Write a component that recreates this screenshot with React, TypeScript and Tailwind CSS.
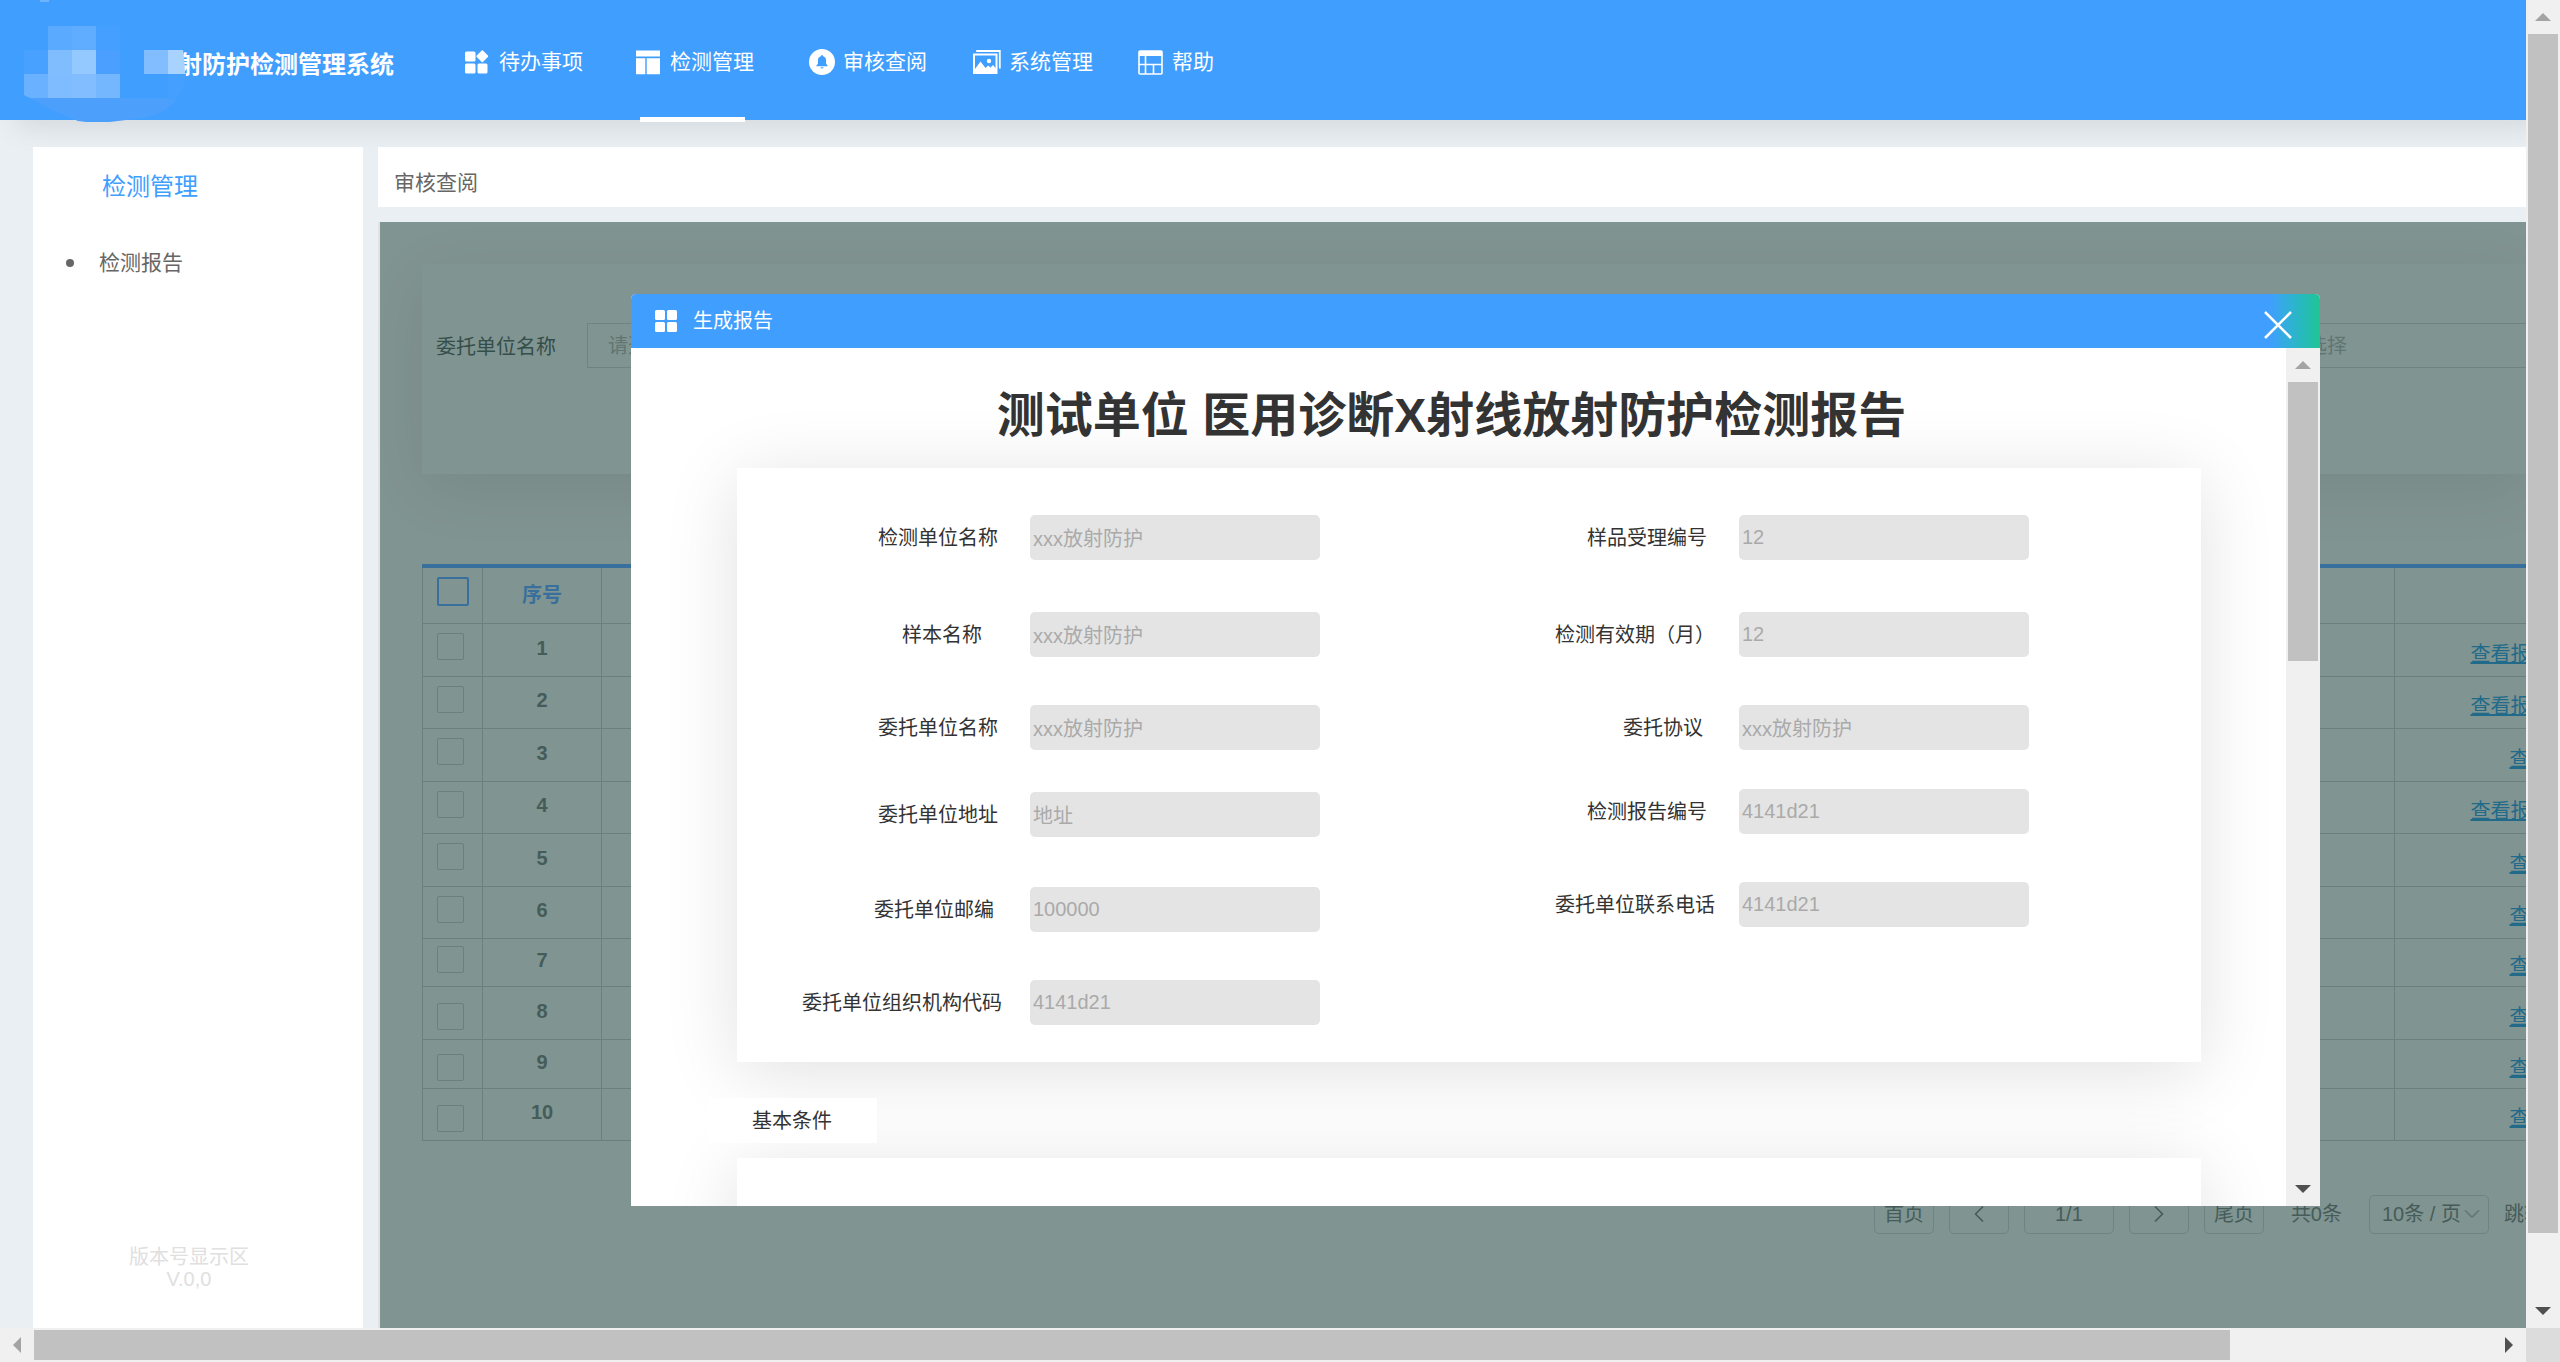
import type { ReactNode } from 'react'
import clsx from 'clsx'
import { ChevronDown, ChevronLeft, ChevronRight } from 'lucide-react'

type Field = { id: string; label: string; value: string; gap: string }

const leftFields: Field[] = [
  { id: 'testOrg', label: '检测单位名称', value: 'xxx放射防护', gap: 'pr-8' },
  { id: 'sampleName', label: '样本名称', value: 'xxx放射防护', gap: 'pr-12' },
  { id: 'clientName', label: '委托单位名称', value: 'xxx放射防护', gap: 'pr-8' },
  { id: 'clientAddress', label: '委托单位地址', value: '地址', gap: 'pr-8' },
  { id: 'clientZip', label: '委托单位邮编', value: '100000', gap: 'pr-9' },
  { id: 'clientCode', label: '委托单位组织机构代码', value: '4141d21', gap: 'pr-7' },
]

const rightFields: Field[] = [
  { id: 'sampleNo', label: '样品受理编号', value: '12', gap: 'pr-8' },
  { id: 'validMonths', label: '检测有效期（月）', value: '12', gap: 'pr-6' },
  { id: 'agreement', label: '委托协议', value: 'xxx放射防护', gap: 'pr-9' },
  { id: 'reportNo', label: '检测报告编号', value: '4141d21', gap: 'pr-8' },
  { id: 'clientPhone', label: '委托单位联系电话', value: '4141d21', gap: 'pr-6' },
]

const rows = [
  { height: 'h-[53px]', full: true },
  { height: 'h-[52px]', full: true },
  { height: 'h-[53px]', full: false },
  { height: 'h-[52px]', full: true },
  { height: 'h-[53px]', full: false },
  { height: 'h-[52px]', full: false },
  { height: 'h-12', full: false },
  { height: 'h-[53px]', full: false },
  { height: 'h-[49px]', full: false },
  { height: 'h-[52px]', full: false },
]

function TodoIcon() {
  return (
    <svg viewBox="0 0 26 26" className="size-[26px] shrink-0" fill="currentColor">
      <rect x="0" y="2.5" width="10.5" height="10" rx="1.5" />
      <rect x="0" y="14.5" width="10.5" height="10" rx="1.5" />
      <rect x="12.5" y="14.5" width="10" height="10" rx="1.5" />
      <path d="M16.7 1.4a.9.9 0 0 1 1.2 0l5 5.2a.9.9 0 0 1 0 1.3l-5 5.2a.9.9 0 0 1-1.2 0l-5-5.2a.9.9 0 0 1 0-1.3z" />
    </svg>
  )
}

function LayoutIcon() {
  return (
    <svg viewBox="0 0 26 26" className="size-[26px] shrink-0" fill="currentColor">
      <path d="M0 1.5h24v6H0zM0 9.2h9.3v16H0zM10.7 9.2H24v16H10.7z" />
    </svg>
  )
}

function BellIcon() {
  return (
    <svg viewBox="0 0 26 26" className="size-[26px] shrink-0">
      <circle cx="13" cy="13" r="13" fill="currentColor" />
      <path d="M13 6.2c.8 0 1.2.5 1.2 1.1 2 .6 2.9 2.3 2.9 4.2v3.2l1.5 1.9v.7H7.4v-.7l1.5-1.9v-3.2c0-1.9.9-3.6 2.9-4.2 0-.6.4-1.1 1.2-1.1zM11.5 18.2h3a1.5 1.3 0 0 1-3 0z" fill="#409eff" />
    </svg>
  )
}

function PictureIcon() {
  return (
    <svg viewBox="0 0 28 26" className="h-[26px] w-7 shrink-0" fill="none" stroke="currentColor">
      <path d="M3.2 2h23.6v17.5" strokeWidth="1.8" />
      <rect x="1" y="5.5" width="22.5" height="18.5" strokeWidth="2" />
      <circle cx="16" cy="12" r="2.2" fill="currentColor" stroke="none" />
      <path d="M2 20l5.500-7.500 5 6.500 2.700-2.500 2.300 2 2.500-2.500 3 3.500v4.500H2z" fill="currentColor" stroke="none" />
    </svg>
  )
}

function GridIcon() {
  return (
    <svg viewBox="0 0 26 26" className="size-[26px] shrink-0" fill="none" stroke="currentColor">
      <rect x="1" y="2" width="23" height="23" rx="1" strokeWidth="1.6" />
      <path d="M1 2h23v5H1z" fill="currentColor" stroke="none" />
      <path d="M1 15.5h23M7.5 7v18M15.5 15.5V25" strokeWidth="1.6" />
    </svg>
  )
}

function MosaicLogo() {
  return (
    <svg viewBox="0 0 190 122" className="absolute left-0 top-0 h-[122px] w-[190px]" aria-hidden="true">
      <defs>
        <clipPath id="logo-shape">
          <path d="M24 0H172Q184 40 186 74C186 96 166 115 142 118L118 121Q98 124 78 121L54 111L24 95z" />
        </clipPath>
      </defs>
      <path d="M40 0h9v2h-9z" fill="#6db4ff" />
      <g clipPath="url(#logo-shape)">
        <path d="M24 98H190V124H24z" fill="#4d9ffc" />
        <path d="M168 74h22v26h-22zM96 26h24v24H96z" fill="#459ffe" />
        <path d="M48 26h24v24H48z" fill="#5aaaff" />
        <path d="M72 26h24v24H72z" fill="#60adff" />
        <path d="M24 50h24v24H24z" fill="#48a1ff" />
        <path d="M48 50h24v24H48z" fill="#80bdff" />
        <path d="M72 50h24v24H72z" fill="#94c9ff" />
        <path d="M96 50h24v24H96z" fill="#4ba0ff" />
        <path d="M24 74h24v24H24z" fill="#6ab2ff" />
        <path d="M48 74h24v24H48z" fill="#7fbcff" />
        <path d="M72 74h24v24H72z" fill="#82beff" />
        <path d="M96 74h24v24H96z" fill="#74b7ff" />
      </g>
      <path d="M144 50h24v24h-24z" fill="#82beff" />
      <path d="M168 50h15q2 12 2 24h-17z" fill="#a9d3ff" />
    </svg>
  )
}

function Arrow({ className }: { className?: string }) {
  return (
    <svg viewBox="0 0 16 8" className={clsx('h-2 w-4', className)} fill="currentColor">
      <path d="M0 8 8 0l8 8z" />
    </svg>
  )
}

function VerticalBar({ thumb }: { thumb: string }) {
  return (
    <div className="relative flex w-[34px] shrink-0 flex-col bg-[#f0f0f0]">
      <button aria-label="向上滚动" className="flex h-[34px] items-center justify-center text-[#a3a3a3]">
        <Arrow />
      </button>
      <div className="min-h-0 flex-1 px-0.5">
        <div className={clsx('bg-[#c1c1c1]', thumb)} />
      </div>
      <button aria-label="向下滚动" className="flex h-[34px] items-center justify-center text-[#505050]">
        <Arrow className="rotate-180" />
      </button>
    </div>
  )
}

function HorizontalBar() {
  return (
    <div className="flex h-[34px] shrink-0 bg-[#f0f0f0]">
      <button aria-label="向左滚动" className="flex w-[34px] items-center justify-center text-[#a3a3a3]">
        <Arrow className="-rotate-90" />
      </button>
      <div className="flex-1 py-0.5 pr-[262px]">
        <div className="h-full bg-[#c1c1c1]" />
      </div>
      <button aria-label="向右滚动" className="flex w-[34px] items-center justify-center text-[#505050]">
        <Arrow className="rotate-90" />
      </button>
      <div className="w-[34px] bg-[#dcdcdc]" />
    </div>
  )
}

function NavItem({ icon, label, active }: { icon: ReactNode; label: string; active?: boolean }) {
  return (
    <a href="#" className="relative flex items-center gap-2 pt-1">
      {icon}
      {label}
      {active && <span className="absolute -bottom-0.5 left-1 h-[5px] w-[105px] bg-white" />}
    </a>
  )
}

function FieldRow({ field, labelWidth }: { field: Field; labelWidth: string }) {
  return (
    <div className="flex h-[45px] items-center">
      <label htmlFor={field.id} className={clsx('text-right text-[#333]', labelWidth, field.gap)}>
        {field.label}
      </label>
      <input
        id={field.id}
        defaultValue={field.value}
        disabled
        className="h-[45px] w-[290px] rounded-[5px] bg-[#e4e4e4] px-[3px] text-[#aaa]"
      />
    </div>
  )
}

function ReportDialog() {
  return (
    <div role="dialog" aria-label="生成报告" className="flex flex-1 flex-col overflow-hidden rounded-t-[5px] bg-white">
      <div className="flex h-[54px] shrink-0 items-center bg-linear-to-r from-[#409eff] from-97% to-[#20c594] pl-6 pr-7 text-white">
        <svg viewBox="0 0 22 22" className="size-[22px]" fill="currentColor">
          <rect width="10" height="10" rx="1.5" />
          <rect x="12" width="10" height="10" rx="1.5" />
          <rect y="12" width="10" height="10" rx="1.5" />
          <rect x="12" y="12" width="10" height="10" rx="1.5" />
        </svg>
        <h2 className="flex-1 pl-4 text-[20px]">生成报告</h2>
        <button aria-label="关闭" className="pt-2">
          <svg viewBox="0 0 28 28" className="size-7" fill="none" stroke="currentColor" strokeWidth="2.5">
            <path d="M1 1 27 27M27 1 1 27" />
          </svg>
        </button>
      </div>
      <div className="flex min-h-0 flex-1">
        <div className="flex-1 overflow-hidden">
          <h1 className="pb-6 pr-3.5 pt-10 text-center text-[48px] font-bold leading-[56px] text-[#333]">
            测试单位 医用诊断X射线放射防护检测报告
          </h1>
          <div className="ml-[106px] mr-[85px] flex bg-white pb-[37px] pt-[47px] shadow-[0_10px_70px_rgba(0,0,0,0.12)]">
            <div className="grid grid-rows-[97px_93px_87px_95px_93px_45px]">
              {leftFields.map((f) => <FieldRow key={f.id} field={f} labelWidth="w-[293px]" />)}
            </div>
            <div className="grid grid-rows-[97px_93px_84px_93px_45px] content-start">
              {rightFields.map((f) => <FieldRow key={f.id} field={f} labelWidth="w-[419px]" />)}
            </div>
          </div>
          <div className="relative ml-[76px] mt-9 flex h-[45px] w-[170px] items-center justify-center bg-white text-[#333]">
            基本条件
          </div>
          <div className="ml-[106px] mr-[85px] mt-[15px] h-80 bg-white shadow-[0_10px_70px_rgba(0,0,0,0.12)]" />
        </div>
        <VerticalBar thumb="h-[calc(100%-511px)]" />
      </div>
    </div>
  )
}

function ReportTable() {
  return (
    <table className="w-full table-fixed border-collapse">
      <colgroup>
        <col className="w-[60px]" />
        <col className="w-[119px]" />
        <col />
        <col className="w-[132px]" />
      </colgroup>
      <thead>
        <tr className="h-[57px] border-t-4 border-[#396f9c] text-[#396f9c]">
          <th className="border-x border-b border-[#6b807d] pb-2 pl-3.5 text-left">
            <input type="checkbox" aria-label="全选" className="block h-[29px] w-8 appearance-none rounded-xs border-2 border-[#396f9c]" />
          </th>
          <th className="border-x border-b border-[#6b807d] font-bold">序号</th>
          <th className="border-x border-b border-[#6b807d]" />
          <th className="border-b border-[#6b807d]" />
        </tr>
      </thead>
      <tbody>
        {rows.map((row, i) => (
          <tr key={i} className={row.height}>
            <td className={clsx('border border-[#6b807d] pl-3.5', i > 6 ? 'pt-2' : 'pb-1.5')}>
              <input type="checkbox" aria-label={`选择第${i + 1}行`} className="block size-[27px] appearance-none rounded-xs border border-[#6b807d]" />
            </td>
            <td className="border border-[#6b807d] pb-1 text-center font-bold text-[#465c59]">{i + 1}</td>
            <td className="border border-[#6b807d]" />
            <td className={clsx('overflow-hidden whitespace-nowrap border-y border-[#6b807d] pt-2', row.full ? 'pl-[76px]' : 'pl-[115px]')}>
              <a href="#" className="text-[#226a8a] underline">{row.full ? '查看报告' : '查看'}</a>
            </td>
          </tr>
        ))}
      </tbody>
    </table>
  )
}

function Pagination() {
  const box = 'flex h-[39px] items-center justify-center rounded-[5px] border border-[#6f8481]'
  return (
    <div className="mt-[54px] flex items-center justify-end gap-[15px] text-[#465c59]">
      <button className={clsx(box, 'w-[60px]')}>首页</button>
      <button aria-label="上一页" className={clsx(box, 'w-[60px]')}><ChevronLeft size={28} strokeWidth={1.5} /></button>
      <span className={clsx(box, 'w-[90px]')}>1/1</span>
      <button aria-label="下一页" className={clsx(box, 'w-[60px]')}><ChevronRight size={28} strokeWidth={1.5} /></button>
      <button className={clsx(box, 'w-[60px]')}>尾页</button>
      <span className="px-3">共0条</span>
      <div className="relative">
        <select aria-label="每页条数" className="h-[39px] w-[120px] appearance-none rounded-[5px] border border-[#6f8481] bg-transparent pl-3">
          <option>10条 / 页</option>
        </select>
        <ChevronDown size={26} strokeWidth={1.5} className="pointer-events-none absolute right-1 top-1.5 text-[#627774]" />
      </div>
      <span className="w-[22px] overflow-hidden whitespace-nowrap">跳转</span>
    </div>
  )
}

export default function App() {
  return (
    <div className="flex h-screen flex-col overflow-hidden bg-[#e9eff3] font-['Liberation_Sans','Noto_Sans_CJK_SC',sans-serif] text-[20px] leading-6">
      <div className="flex min-h-0 flex-1">
        <div className="flex min-w-0 flex-1 flex-col">
          <header className="relative flex h-[120px] shrink-0 bg-[#409eff] text-white shadow-[16px_6px_28px_rgba(0,0,0,0.1)]">
            <div className="flex w-[465px] items-center pl-[178px] pt-2.5 text-[24px] font-bold">射防护检测管理系统</div>
            <MosaicLogo />
            <nav className="grid grid-cols-[171px_173px_164px_165px_auto] text-[21px]">
              <NavItem icon={<TodoIcon />} label="待办事项" />
              <NavItem icon={<LayoutIcon />} label="检测管理" active />
              <NavItem icon={<BellIcon />} label="审核查阅" />
              <NavItem icon={<PictureIcon />} label="系统管理" />
              <NavItem icon={<GridIcon />} label="帮助" />
            </nav>
          </header>

          <div className="relative flex min-h-0 flex-1 gap-[15px] pl-[33px] pt-[27px]">
            <aside className="flex w-[330px] shrink-0 flex-col bg-white">
              <h2 className="pl-[69px] pt-7 text-[24px] text-[#409eff]">检测管理</h2>
              <ul className="flex-1 pt-[52px] text-[21px] text-[#666]">
                <li className="flex items-center gap-[25px] pl-[33px]">
                  <span className="size-2 rounded-full bg-[#666]" />
                  <a href="#">检测报告</a>
                </li>
              </ul>
              <p className="pb-[38px] pr-[18px] text-center leading-[22px] text-[#e0e0e0]">
                版本号显示区
                <br />
                V.0,0
              </p>
            </aside>

            <main className="flex min-w-0 flex-1 flex-col gap-[15px]">
              <div className="flex h-[60px] shrink-0 items-center bg-white pl-4 pt-3 text-[21px] text-[#666]">审核查阅</div>
              <section className="relative min-h-0 flex-1 overflow-hidden border-l-2 border-[#dfe3e5] bg-[#809491] pl-[42px] pt-[42px]">
                <div className="mb-[90px] flex h-[210px] items-start bg-[#809491] pl-3.5 pt-[59px] shadow-[0_15px_60px_rgba(0,0,0,0.08)]">
                  <label htmlFor="client" className="w-[151px] pt-3 text-[#344e4a]">委托单位名称</label>
                  <select id="client" className="h-[45px] w-[290px] appearance-none border border-[#6f8481] pl-5 text-[#617572]">
                    <option>请选择</option>
                  </select>
                  <select aria-label="筛选条件" className="ml-auto h-[45px] w-[260px] appearance-none border border-r-0 border-[#6f8481] pl-5 text-[#617572]">
                    <option>请选择</option>
                  </select>
                </div>
                <ReportTable />
                <Pagination />

                <div className="absolute inset-0 flex pb-[122px] pl-[251px] pr-[206px] pt-[72px]">
                  <ReportDialog />
                </div>
              </section>
            </main>
          </div>
        </div>
        <VerticalBar thumb="h-[calc(100%-61px)]" />
      </div>
      <HorizontalBar />
    </div>
  )
}
